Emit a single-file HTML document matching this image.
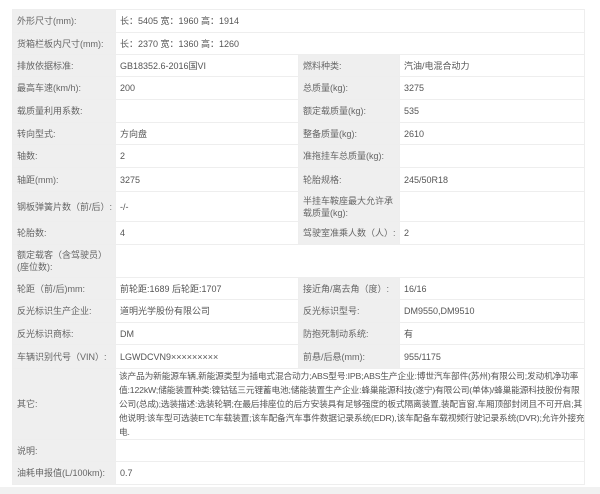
<!DOCTYPE html>
<html><head><meta charset="utf-8"><style>
html,body{margin:0;padding:0;background:#fff;width:600px;height:494px;overflow:hidden}
body{font-family:"Liberation Sans","Noto Sans CJK SC",sans-serif;font-size:9px;color:#555}
table{position:absolute;left:12px;top:9px;border-collapse:collapse;table-layout:fixed;width:572px}
td{border:1px solid #eee;padding:0 0 0 4px;vertical-align:middle;line-height:12px;overflow:hidden;white-space:nowrap}
td.l{background:#efefef;color:#666}
td.w{white-space:normal}
td.o{font-size:8.7px;letter-spacing:-0.15px;line-height:14px;padding-left:3px}
.strip{position:absolute;left:0;top:487px;width:600px;height:7px;background:#f1f1f1}
</style></head><body>
<table>
<colgroup><col style="width:103px"><col style="width:183px"><col style="width:101px"><col style="width:185px"></colgroup>
<tr style="height:23px"><td class="l">外形尺寸(mm):</td><td colspan="3">长：5405 宽：1960 高：1914</td></tr>
<tr style="height:22px"><td class="l">货箱栏板内尺寸(mm):</td><td colspan="3">长：2370 宽：1360 高：1260</td></tr>
<tr style="height:22px"><td class="l">排放依据标准:</td><td>GB18352.6-2016国VI</td><td class="l">燃料种类:</td><td>汽油/电混合动力</td></tr>
<tr style="height:23px"><td class="l">最高车速(km/h):</td><td>200</td><td class="l">总质量(kg):</td><td>3275</td></tr>
<tr style="height:23px"><td class="l">载质量利用系数:</td><td></td><td class="l">额定载质量(kg):</td><td>535</td></tr>
<tr style="height:22px"><td class="l">转向型式:</td><td>方向盘</td><td class="l">整备质量(kg):</td><td>2610</td></tr>
<tr style="height:23px"><td class="l">轴数:</td><td>2</td><td class="l">准拖挂车总质量(kg):</td><td></td></tr>
<tr style="height:24px"><td class="l">轴距(mm):</td><td>3275</td><td class="l">轮胎规格:</td><td>245/50R18</td></tr>
<tr style="height:30px"><td class="l">钢板弹簧片数（前/后）:</td><td>-/-</td><td class="l w">半挂车鞍座最大允许承载质量(kg):</td><td></td></tr>
<tr style="height:23px"><td class="l">轮胎数:</td><td>4</td><td class="l">驾驶室准乘人数（人）:</td><td>2</td></tr>
<tr style="height:33px"><td class="l w">额定载客（含驾驶员）(座位数):</td><td colspan="3"></td></tr>
<tr style="height:22px"><td class="l">轮距（前/后)mm:</td><td>前轮距:1689 后轮距:1707</td><td class="l">接近角/离去角（度）:</td><td>16/16</td></tr>
<tr style="height:23px"><td class="l">反光标识生产企业:</td><td>道明光学股份有限公司</td><td class="l">反光标识型号:</td><td>DM9550,DM9510</td></tr>
<tr style="height:22px"><td class="l">反光标识商标:</td><td>DM</td><td class="l">防抱死制动系统:</td><td>有</td></tr>
<tr style="height:24px"><td class="l">车辆识别代号（VIN）:</td><td>LGWDCVN9×××××××××</td><td class="l">前悬/后悬(mm):</td><td>955/1175</td></tr>
<tr style="height:70px"><td class="l">其它:</td><td colspan="3" class="o">该产品为新能源车辆,新能源类型为插电式混合动力;ABS型号:IPB;ABS生产企业:博世汽车部件(苏州)有限公司;发动机净功率<br>值:122kW;储能装置种类:镍钴锰三元锂蓄电池;储能装置生产企业:蜂巢能源科技(遂宁)有限公司(单体)/蜂巢能源科技股份有限<br>公司(总成);选装描述:选装轮辋;在最后排座位的后方安装具有足够强度的板式隔离装置,装配盲窗,车厢顶部封闭且不可开启;其<br>他说明:该车型可选装ETC车载装置;该车配备汽车事件数据记录系统(EDR),该车配备车载视频行驶记录系统(DVR);允许外接充<br>电.</td></tr>
<tr style="height:22px"><td class="l">说明:</td><td colspan="3"></td></tr>
<tr style="height:23px"><td class="l">油耗申报值(L/100km):</td><td colspan="3">0.7</td></tr>
</table>
<div class="strip"></div>
</body></html>
